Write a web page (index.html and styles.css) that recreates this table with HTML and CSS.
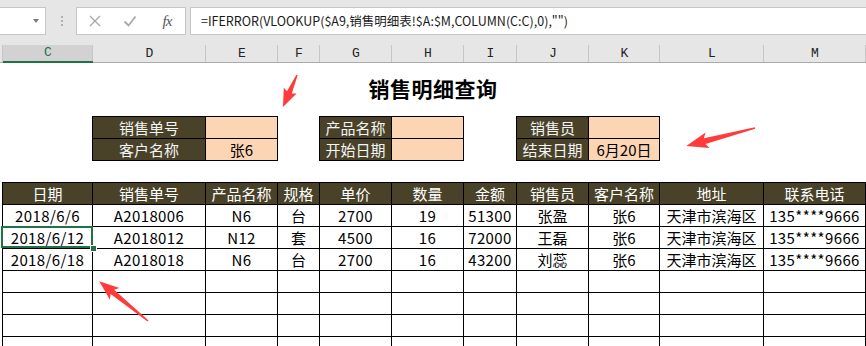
FILE: index.html
```html
<!DOCTYPE html>
<html lang="zh-CN">
<head>
<meta charset="utf-8">
<title>销售明细查询</title>
<link rel="stylesheet" href="styles.css">
</head>
<body>
<div class="app">
  <div class="formula-bar">
    <div class="name-box"><span class="caret"></span></div>
    <div class="grip"><i></i><i></i><i></i></div>
    <div class="fx-box">
      <svg class="btn" width="14" height="14" viewBox="0 0 14 14"><path d="M2 2 L12 12 M12 2 L2 12" stroke="#a8a8a8" stroke-width="1.3" fill="none"/></svg>
      <svg class="btn ok" width="14" height="14" viewBox="0 0 14 14"><path d="M1.5 7.5 L5.5 11.5 L12.5 2.5" stroke="#a8a8a8" stroke-width="1.8" fill="none"/></svg>
      <span class="fx">fx</span>
    </div>
    <div class="formula-input">=IFERROR(VLOOKUP($A9,销售明细表!$A:$M,COLUMN(C:C),0),"")</div>
  </div>

  <div class="col-headers">
    <div class="ch"></div>
    <div class="ch sel">C</div>
    <div class="ch">D</div>
    <div class="ch">E</div>
    <div class="ch">F</div>
    <div class="ch">G</div>
    <div class="ch">H</div>
    <div class="ch">I</div>
    <div class="ch">J</div>
    <div class="ch">K</div>
    <div class="ch">L</div>
    <div class="ch">M</div>
    <div class="ch"></div>
  </div>

  <div class="sheet">
    <div class="title">销售明细查询</div>

    <div class="criteria">
      <div class="lookup sale-no">
        <span class="lbl">销售单号</span><span class="val"></span>
        <span class="lbl">客户名称</span><span class="val">张6</span>
      </div>
      <div class="lookup product">
        <span class="lbl">产品名称</span><span class="val"></span>
        <span class="lbl">开始日期</span><span class="val"></span>
      </div>
      <div class="lookup seller">
        <span class="lbl">销售员</span><span class="val"></span>
        <span class="lbl">结束日期</span><span class="val">6月20日</span>
      </div>
    </div>

    <div class="data">
      <span class="th">日期</span><span class="th">销售单号</span><span class="th">产品名称</span><span class="th">规格</span><span class="th">单价</span><span class="th">数量</span><span class="th">金额</span><span class="th">销售员</span><span class="th">客户名称</span><span class="th">地址</span><span class="th">联系电话</span>

      <span class="num">2018/6/6</span><span class="num">A2018006</span><span class="num">N6</span><span>台</span><span class="num">2700</span><span class="num">19</span><span class="num">51300</span><span>张盈</span><span>张6</span><span>天津市滨海区</span><span class="num">135****9666</span>

      <span class="num active">2018/6/12</span><span class="num">A2018012</span><span class="num">N12</span><span>套</span><span class="num">4500</span><span class="num">16</span><span class="num">72000</span><span>王磊</span><span>张6</span><span>天津市滨海区</span><span class="num">135****9666</span>

      <span class="num">2018/6/18</span><span class="num">A2018018</span><span class="num">N6</span><span>台</span><span class="num">2700</span><span class="num">16</span><span class="num">43200</span><span>刘蕊</span><span>张6</span><span>天津市滨海区</span><span class="num">135****9666</span>

      <span></span><span></span><span></span><span></span><span></span><span></span><span></span><span></span><span></span><span></span><span></span>
      <span></span><span></span><span></span><span></span><span></span><span></span><span></span><span></span><span></span><span></span><span></span>
      <span></span><span></span><span></span><span></span><span></span><span></span><span></span><span></span><span></span><span></span><span></span>
      <span></span><span></span><span></span><span></span><span></span><span></span><span></span><span></span><span></span><span></span><span></span>
    </div>
  </div>

  <!-- red callout arrows drawn on top of the sheet -->
  <svg class="marks" width="866" height="346" viewBox="0 0 866 346">
    <g fill="#ff3b3b">
      <g transform="translate(297 75) rotate(113.6)">
        <polygon points="0,-0.7 19,-2.6 17,-7 35,0 17,7 19,2.6 0,0.7"/>
      </g>
      <g transform="translate(755 128) rotate(165.4)">
        <polygon points="0,-0.8 52,-3 49,-8 71,0 49,8 52,3 0,0.8"/>
      </g>
      <g transform="translate(148 321) rotate(-140.8)">
        <polygon points="0,-0.8 46,-2.8 43,-7.5 63,0 43,7.5 46,2.8 0,0.8"/>
      </g>
    </g>
  </svg>
</div>
</body>
</html>
```

FILE: styles.css
```css
html, body {
  margin: 0;
  padding: 0;
  background: #ffffff;
}

body {
  font-family: "Noto Sans CJK SC", "Noto Sans", sans-serif;
  color: #000;
}

.app {
  position: relative;
  width: 866px;
  height: 346px;
  overflow: hidden;
}

/* ---------- formula bar ---------- */
.formula-bar {
  height: 45px;
  box-sizing: border-box;
  padding-top: 7px;
  background: #e6e6e6;
  display: flex;
  align-items: flex-start;
}

.name-box {
  margin-left: -1px;
  width: 47px;
  height: 28px;
  box-sizing: border-box;
  border: 1px solid #c6c6c6;
  background: #fff;
  display: flex;
  justify-content: flex-end;
  align-items: center;
  padding-right: 6px;
}

.caret {
  width: 0;
  height: 0;
  border-left: 3.5px solid transparent;
  border-right: 3.5px solid transparent;
  border-top: 4px solid #7a7a7a;
  margin-top: -1px;
}

.grip {
  margin-left: 15px;
  width: 2px;
  padding-top: 9px;
  display: flex;
  flex-direction: column;
  gap: 2px;
}

.grip i {
  display: block;
  width: 2px;
  height: 2px;
  background: #b0b0b0;
}

.fx-box {
  margin-left: 13px;
  width: 110px;
  height: 28px;
  box-sizing: border-box;
  border: 1px solid #c6c6c6;
  background: #fff;
  display: flex;
  align-items: center;
  padding-left: 11px;
}

.fx-box .btn {
  display: block;
  flex: none;
}

.fx-box .ok {
  margin-left: 21px;
}

.fx {
  margin-left: 22px;
  width: 16px;
  text-align: center;
  font-family: "Liberation Serif", serif;
  font-style: italic;
  font-size: 15px;
  color: #555;
  letter-spacing: -1px;
}

.formula-input {
  margin-left: 4px;
  margin-right: -1px;
  flex: 1;
  height: 28px;
  box-sizing: border-box;
  border: 1px solid #c6c6c6;
  background: #fff;
  padding-left: 10px;
  font-size: 12.5px;
  line-height: 26px;
  white-space: nowrap;
  overflow: hidden;
  color: #1a1a1a;
}

/* ---------- column headers ---------- */
.col-headers {
  display: grid;
  grid-template-columns: 3px 90px 113px 72px 42px 72px 72px 53px 72px 71px 104px 102px 1px;
  height: 18px;
  background: #e6e6e6;
}

.ch {
  position: relative;
  height: 18px;
  box-sizing: border-box;
  border-bottom: 1px solid #ababab;
  font-family: "Liberation Mono", monospace;
  font-size: 13px;
  line-height: 17px;
  text-align: center;
  color: #222;
}

.ch::after {
  content: "";
  position: absolute;
  right: 0;
  top: 0;
  bottom: 0;
  width: 1px;
  background: #c6c6c6;
}

.ch.sel {
  background: #d2d2d2;
  border-bottom: 2px solid #217346;
  color: #217346;
  line-height: 16px;
}

/* ---------- sheet ---------- */
.title {
  height: 53px;
  box-sizing: border-box;
  padding-top: 10px;
  line-height: 30px;
  text-align: center;
  font-size: 21px;
  font-weight: 700;
  letter-spacing: 0.5px;
}

.criteria {
  display: grid;
  grid-template-columns: 90px 113px 72px 42px 72px 72px 53px 72px 71px 104px 102px;
  padding-left: 3px;
  height: 45px;
}

.lookup {
  display: grid;
  grid-auto-rows: 22px;
  margin-left: -1px;
  border-top: 1px solid #000;
  border-left: 1px solid #000;
}

.lookup.sale-no {
  grid-column: 2 / 4;
  grid-template-columns: 113px 72px;
}

.lookup.product {
  grid-column: 5 / 7;
  grid-template-columns: 72px 72px;
}

.lookup.seller {
  grid-column: 8 / 10;
  grid-template-columns: 72px 71px;
}

.lookup span,
.data span {
  box-sizing: border-box;
  border-right: 1px solid #000;
  border-bottom: 1px solid #000;
  font-size: 15px;
  line-height: 21px;
  text-align: center;
  white-space: nowrap;
  overflow: visible;
}

.lookup .lbl {
  background: #494229;
  color: #f4f4f4;
}

.lookup .val {
  background: #fcd5b4;
}

.data {
  margin: 21px 0 0 2px;
  display: grid;
  grid-template-columns: 90px 113px 72px 42px 72px 72px 53px 72px 71px 104px 102px;
  grid-auto-rows: 22px;
  border-top: 1px solid #000;
  border-left: 1px solid #000;
}

.data .th {
  background: #494229;
  color: #ffffff;
}

/* figures sit a touch wider than the CJK text */
.data .num {
  letter-spacing: 0.4px;
}

.data .active {
  position: relative;
}

.data .active::after {
  content: "";
  position: absolute;
  left: -2px;
  top: -1px;
  right: -1px;
  bottom: 0;
  border: 2px solid #217346;
}

.data .active::before {
  content: "";
  position: absolute;
  right: -4px;
  bottom: -3px;
  width: 5px;
  height: 5px;
  background: #217346;
  box-shadow: 0 0 0 1px #fff;
  z-index: 1;
}

/* ---------- callouts ---------- */
.marks {
  position: absolute;
  left: 0;
  top: 0;
  pointer-events: none;
}
```
